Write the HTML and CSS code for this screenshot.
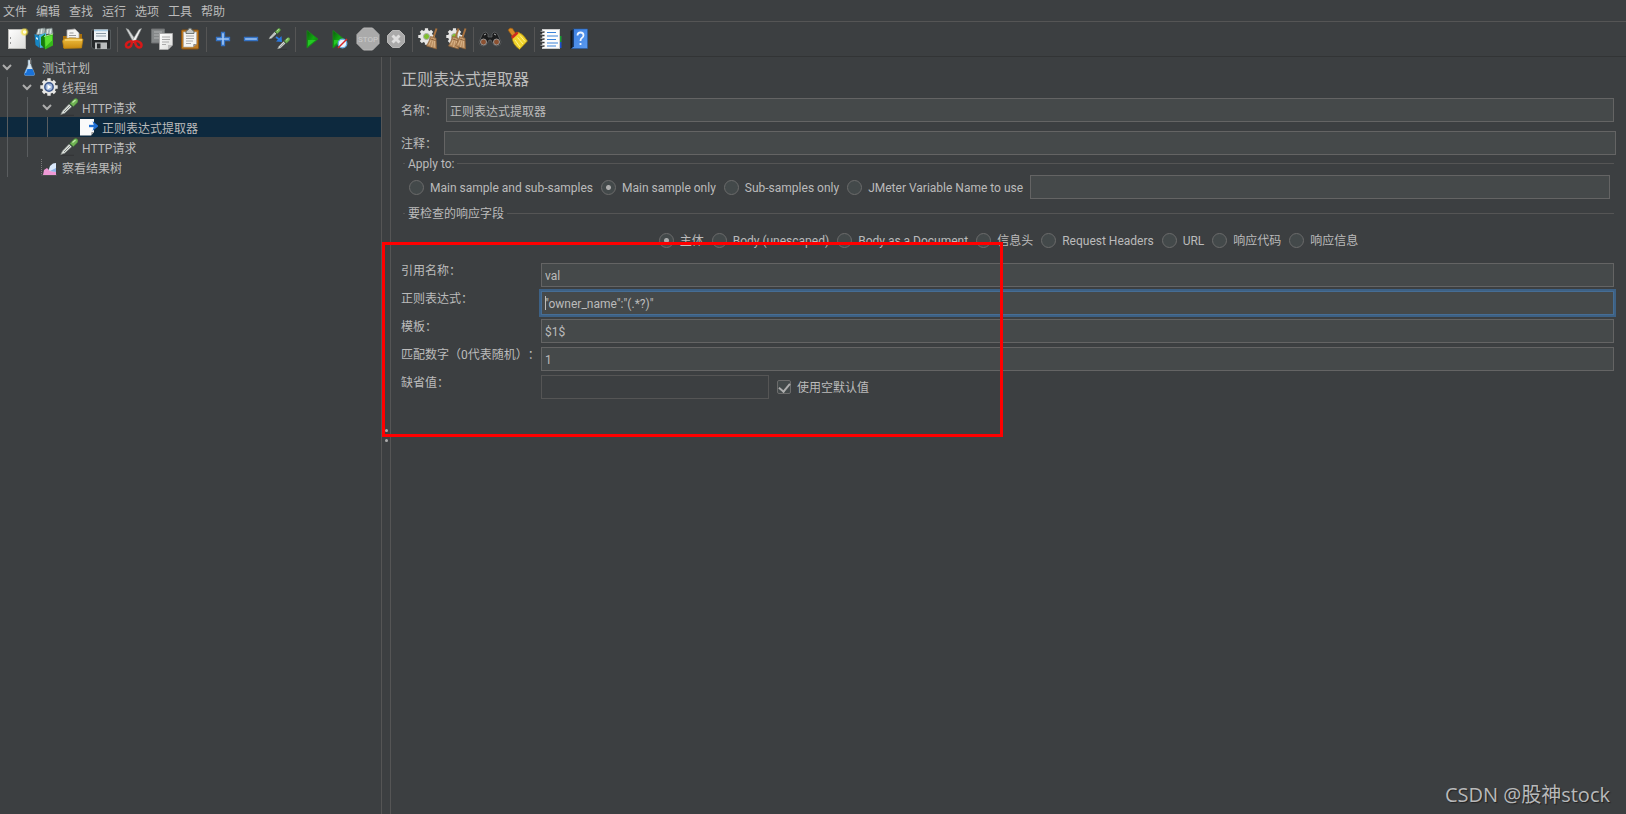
FILE: index.html
```html
<!DOCTYPE html>
<html lang="zh-CN">
<head>
<meta charset="utf-8">
<title>正则表达式提取器</title>
<link rel="stylesheet" href="styles.css">
</head>
<body>
<svg class="defs" aria-hidden="true">
  <defs>
    <linearGradient id="g-page" x1="0" y1="0" x2="1" y2="1"><stop offset="0" stop-color="#fff"/><stop offset="1" stop-color="#dcdcda"/></linearGradient>
    <linearGradient id="g-folder" x1="0" y1="0" x2="0" y2="1"><stop offset="0" stop-color="#f0c040"/><stop offset="1" stop-color="#c98a10"/></linearGradient>
    <linearGradient id="g-play" x1="0" y1="0" x2="1" y2="1"><stop offset="0" stop-color="#0a5c0a"/><stop offset=".5" stop-color="#12a812"/><stop offset="1" stop-color="#0a6a0a"/></linearGradient>
    <linearGradient id="g-book" x1="0" y1="0" x2="1" y2="1"><stop offset="0" stop-color="#3a7ee0"/><stop offset="1" stop-color="#5b9bf0"/></linearGradient>
    <radialGradient id="g-glow"><stop offset="0" stop-color="#fffbd0"/><stop offset=".45" stop-color="#f5e14a"/><stop offset="1" stop-color="#f5e14a" stop-opacity="0"/></radialGradient>
    <symbol id="dropper" viewBox="0 0 18 18">
      <path d="M1 17.300h13" stroke="#2c2e2f" stroke-width="1" opacity=".6"/>
      <path d="M.8 16.500 2.500 13 9.500 5.800l2.700 2.400-7.500 7z" fill="#dfe4df" stroke="#858a87" stroke-width=".7"/>
      <path d="M4 14 10.500 7.500" stroke="#6a706d" stroke-width=".8"/>
      <path d="m9 5 4 4" stroke="#35433a" stroke-width="1.500"/>
      <path d="m10 5.500 4-4.200q2-1.500 3.300 0t0 3.300l-4 3.900z" fill="#72b455" stroke="#468a36" stroke-width=".6"/>
      <path d="m12.500 4.500 3-2.500" stroke="#c5ebae" stroke-width="1.200"/>
    </symbol>
    <symbol id="gear" viewBox="0 0 18 18">
      <g fill="#e7e7e5"><circle cx="9" cy="9" r="6.800"/><g stroke="#e7e7e5" stroke-width="3.400"><path d="M9 .3v17.400M.3 9h17.400M3 3l12 12M15 3 3 15"/></g></g>
    </symbol>
    <symbol id="broom" viewBox="0 0 12 22">
      <path d="m10.500.5-3 9" stroke="#a8723f" stroke-width="2"/>
      <path d="M4.500 8.500 10 10l.5 11-10-3Q3.500 13 4.500 8.500z" fill="#b98d5f" stroke="#8a6038" stroke-width=".7"/>
      <path d="M6 10 3 17M7.500 10.500 5.500 19M8.700 11l-.5 8.500" stroke="#e0bd92" stroke-width=".8"/>
      <path d="m4.500 11 5 1.500" stroke="#7b4d27" stroke-width=".8"/>
    </symbol>
  </defs>
</svg>

<nav class="menubar" aria-label="主菜单">
  <button>文件</button><button>编辑</button><button>查找</button><button>运行</button><button>选项</button><button>工具</button><button>帮助</button>
</nav>

<div class="toolbar" role="toolbar" aria-label="工具栏">
  <button aria-label="新建"><svg viewBox="0 0 24 24"><rect x="3.500" y="2.500" width="17" height="19" fill="url(#g-page)" stroke="#b9b9b6"/><path d="M5.500 10v2M5.500 15v2" stroke="#999"/><circle cx="19.500" cy="5" r="4.500" fill="url(#g-glow)"/><circle cx="19.500" cy="5" r="1.800" fill="#fffde0"/></svg></button>
  <button aria-label="模板"><svg viewBox="0 0 24 24"><path d="m3 8 2-6 7-1 1 6zM11 7l2-5 6-1 1 6z" fill="#aab6b5" stroke="#707d7c" stroke-width=".7"/><path d="m6 2-1 5m4-5.500L8 7m7-5-1 5m4-5-1 5" stroke="#e4eaea"/><path d="m1.500 7 5 2v12l-4-3z" fill="#1686c4"/><path d="m6 8 7-2v14l-6 1z" fill="#45b4e6"/><path d="m3 10 2 1v2l-2-1z" fill="#c8ecff"/><path d="m8 10 4-3v15l-4-4z" fill="#167c0c"/><path d="m11.500 9.500 8.500-2v11l-8 4z" fill="#35b81a"/><path d="m12 10 7-1.500v5L12.500 20z" fill="#5ee032"/><path d="m11 9.500 9-2.500" stroke="#a8f088"/></svg></button>
  <button aria-label="打开"><svg viewBox="0 0 24 24"><path d="M2 9h4l1-2h14v14H2z" fill="#a96f0a"/><path d="M6 13V3l8-1 4 4v8z" fill="#f4f4f2" stroke="#aaa" stroke-width=".8"/><path d="M8.500 6h4M8 8.500h7M8 11h7" stroke="#999"/><path d="m3 12 6-1 12 .500 1 1-1.500 8.500L3 21.500 1.500 14z" fill="url(#g-folder)" stroke="#b57d10" stroke-width=".7"/><path d="M4 13h17" stroke="#ffe28c"/></svg></button>
  <button aria-label="保存"><svg viewBox="0 0 24 24"><path d="M2.500 3h19v19H4.500l-2-2z" fill="#25282a" stroke="#555a5c"/><rect x="5" y="2.500" width="14" height="10.500" fill="#eef3f6"/><path d="M5 3.500h14" stroke="#a8cce4" stroke-width="1.500"/><path d="M7 6.500h10M7 9h10" stroke="#8a9aa5"/><rect x="6" y="15.500" width="12" height="6.500" fill="#babdbe"/><rect x="8" y="16.500" width="3.500" height="5" fill="#25282a"/></svg></button>
  <span class="sep"></span>
  <button aria-label="剪切"><svg viewBox="0 0 24 24"><path d="M4 1.500 6.500 2.500l7.500 11-2.500 2z" fill="#d6d8d8" stroke="#8e9494" stroke-width=".6"/><path d="M19.500 1.500 17 2.500l-7 11.500 2.500 2z" fill="#f1f1f1" stroke="#8e9494" stroke-width=".6"/><path d="M10.500 14.500Q8 13.500 5.500 15.500t-1 4.500q2.500 1.500 4.500-1l1.500-4.500zM12.500 14.500q3-1 5.500 1t1 4.500q-2.500 1.500-4.500-1l-2-4.500z" fill="none" stroke="#d81818" stroke-width="2.400"/></svg></button>
  <button aria-label="复制"><svg viewBox="0 0 24 24"><path d="M1.500 2h13v14h-13z" fill="#858889" stroke="#6c6f70"/><path d="M4 5h8M4 8h8M4 11h8" stroke="#b0b2b3"/><path d="M9.500 6.500h13V18L18 22.500H9.500z" fill="url(#g-page)" stroke="#aaa"/><path d="M12 10h8M12 12.500h8M12 15h7M12 17.500h4" stroke="#aaa"/><path d="M18 22.500V18h4.500z" fill="#bbb"/></svg></button>
  <button aria-label="粘贴"><svg viewBox="0 0 24 24"><rect x="3.500" y="3" width="17" height="19" rx="1" fill="#bd7a23" stroke="#875111"/><path d="M5.500 5h13v12L15 20H5.500z" fill="#f5f5f3" stroke="#aaa" stroke-width=".6"/><path d="M8 5q0-2 2-2 .5-2 2-2t2 2q2 0 2 2v1.500H8z" fill="#c5c9c7" stroke="#59605d" stroke-width=".8"/><path d="M8 9h8M8 11.500h8M8 14h7M8 16.500h5" stroke="#aaa"/><path d="m15 20 .5-3h3z" fill="#888"/></svg></button>
  <span class="sep"></span>
  <button aria-label="展开"><svg viewBox="0 0 24 24"><path d="M10.500 5.500h3v5h5v3h-5v5h-3v-5h-5v-3h5z" fill="#9ec6f6" stroke="#3472c4" stroke-width="1.300"/></svg></button>
  <button aria-label="折叠"><svg viewBox="0 0 24 24"><path d="M5.500 10.500h13v3h-13z" fill="#9ec6f6" stroke="#3472c4" stroke-width="1.300"/></svg></button>
  <button aria-label="切换"><svg viewBox="0 0 24 24"><use href="#dropper" x="1" y="1" width="13" height="12"/><use href="#dropper" x="10" y="10" width="13" height="13"/><path d="m9 10 4 3" stroke="#2a78e0" stroke-width="1.800"/><path d="m14.500 9 .5 6-6-.5z" fill="#2a78e0"/></svg></button>
  <span class="sep"></span>
  <button aria-label="启动"><svg viewBox="0 0 24 24"><path d="M7 3.500 18 12 7 21z" fill="url(#g-play)" stroke="#198c19" stroke-width=".8"/><path d="M8 13h8l-8 6z" fill="#2bd62b" opacity=".75"/></svg></button>
  <button aria-label="不停顿开始"><svg viewBox="0 0 24 24"><path d="M5 3.500 16 12 5 21z" fill="url(#g-play)" stroke="#198c19" stroke-width=".8"/><path d="M6 13h7l-7 5z" fill="#2bd62b" opacity=".75"/><circle cx="14.500" cy="16.500" r="4.300" fill="#e7f4ff" stroke="#69aee4" stroke-width="1.300"/><path d="m10 21 9-9" stroke="#d82424" stroke-width="1.400"/></svg></button>
  <button aria-label="停止" disabled><svg viewBox="0 0 24 24"><path d="M7.500 1h9L23 7.500v9L16.500 23h-9L1 16.500v-9z" fill="#aaa" stroke="#b8b8b8"/><text x="12" y="15" class="stop">STOP</text></svg></button>
  <button aria-label="关闭" disabled><svg viewBox="0 0 24 24"><path d="M8.500 3.500h7l5 5v7l-5 5h-7l-5-5v-7z" fill="#aaa" stroke="#b8b8b8"/><path d="m8.500 8.500 7 7m0-7-7 7" stroke="#dedede" stroke-width="3"/></svg></button>
  <span class="sep"></span>
  <button aria-label="清除"><svg viewBox="0 0 24 24"><use href="#gear" x="1" y="1" width="17" height="17"/><circle cx="9.500" cy="9.500" r="3" fill="#7fc02e" stroke="#aaa"/><use href="#broom" x="9" y="1" width="12" height="22"/></svg></button>
  <button aria-label="清除全部"><svg viewBox="0 0 24 24"><use href="#gear" x="1" y="1" width="17" height="17"/><circle cx="9.500" cy="9.500" r="3" fill="#7fc02e" stroke="#aaa"/><use href="#broom" x="3" y="1" width="12" height="22"/><use href="#broom" x="10" y="1" width="12" height="22"/></svg></button>
  <span class="sep"></span>
  <button aria-label="查找"><svg viewBox="0 0 24 24"><path d="M4 8q1-3 4-3l2 2v3h4V7l2-2q3 0 4 3l3 7q0 4-4 4t-5-4l-1-2h-2l-1 2q-1 4-5 4t-4-4z" fill="#1b1c1d" stroke="#66696a" stroke-width=".7"/><circle cx="5.500" cy="15" r="3" fill="#8c5131" stroke="#999"/><circle cx="18.500" cy="15" r="3" fill="#8c5131" stroke="#999"/><path d="m6 8 2-1m8 0 2 1" stroke="#aaa"/></svg></button>
  <button aria-label="重置查找"><svg viewBox="0 0 24 24"><path d="M2 3q2-3 4.500-1.500L10 7 6.500 9.500z" fill="#d88a27" stroke="#8d5614" stroke-width=".7"/><path d="m6 10 6-5q5 1.500 9.500 9l-8 8.500Q6 17 6 10z" fill="#f0d32b" stroke="#9e7d10" stroke-width=".7"/><path d="m5 9.500 6-5 1.500 2-6 5.500z" fill="#cd2d1e"/><path d="m9 13 5 7m-2.500-9.500L17 17m-3-8.500 5 6" stroke="#fff28a"/></svg></button>
  <span class="sep"></span>
  <button aria-label="函数助手"><svg viewBox="0 0 24 24"><path d="M20 9h2.500v6H20z" fill="#169c32"/><path d="M20 15h2.500v6H20z" fill="#1b50cf"/><rect x="3.500" y="2.500" width="17" height="19" fill="#fcfcfc" stroke="#ccc"/><path d="M8 5.500h9M8 9h11M8 12.500h9M8 16h11M8 19h9" stroke="#3a82d8" stroke-width="1.100"/><path d="M1.500 5h4M1.500 8.500h4M1.500 12h4M1.500 15.500h4M1.500 19h4" stroke="#222" stroke-width="1.500"/><path d="M1.500 4.300h3M1.500 7.800h3M1.500 11.300h3M1.500 14.800h3M1.500 18.300h3" stroke="#ddd" stroke-width=".7"/></svg></button>
  <button aria-label="帮助"><svg viewBox="0 0 24 24"><path d="m3.500 4 3-2v18l-3 2z" fill="#151718"/><path d="M6 2h14.500v19.500H4.500L6 20z" fill="url(#g-book)" stroke="#235ba8" stroke-width=".6"/><path d="M6.500 2v18" stroke="#1c3d70"/><path d="M10.500 8.500q0-3 3-3t3 2.700q0 1.800-1.700 2.800-1.300.8-1.300 3M13.500 16v2" fill="none" stroke="#eef5ff" stroke-width="1.800"/></svg></button>
</div>

<div class="workspace">
  <ul class="tree" role="tree">
    <li role="treeitem"><svg class="chev" viewBox="0 0 20 20"><path d="m3 8 4 4 4-4"/></svg>
      <svg class="ico" viewBox="0 0 18 18"><path d="M8 2h3v5l3.500 8.500q.5 2-1 2h-8q-1.500 0-1-2L8 7z" fill="#d5e4ee" stroke="#8195a2" stroke-width=".6"/><path d="M6.500 11h6l2 4.500q.3 2-1 2h-8q-1.300 0-1-2z" fill="#1a72d8"/><path d="m7 11-1.500 4" stroke="#8cc4ff"/><path d="M10.500 0v6" stroke="#777"/></svg><span>测试计划</span></li>
    <li role="treeitem"><i class="guide"></i><svg class="chev" viewBox="0 0 20 20"><path d="m3 8 4 4 4-4"/></svg>
      <svg class="ico" viewBox="0 0 18 18"><use href="#gear" width="18" height="18"/><circle cx="9" cy="9" r="4.200" fill="#9eb6dc" stroke="#3d588c" stroke-width="1.500"/><path d="m7.500 6.500 4 2.500-4 2.500z" fill="#fff"/></svg><span>线程组</span></li>
    <li role="treeitem"><i class="guide"></i><i class="guide"></i><svg class="chev" viewBox="0 0 20 20"><path d="m3 8 4 4 4-4"/></svg>
      <svg class="ico"><use href="#dropper"/></svg><span>HTTP请求</span></li>
    <li role="treeitem" class="selected" aria-selected="true"><i class="guide"></i><i class="guide"></i><i class="guide"></i><i class="blank"></i>
      <svg class="ico" viewBox="0 0 18 18"><path d="M0 1h14v13l-3 3.500H0z" fill="#fafafa"/><path d="m11 17.500.5-3.500H14z" fill="#999"/><path d="M9 8h6" stroke="#1e6fd4" stroke-width="2.400"/><path d="M12.500 3 18.500 8l-6 5 1.500-5z" fill="#1e6fd4"/></svg><span>正则表达式提取器</span></li>
    <li role="treeitem"><i class="guide"></i><i class="guide"></i><i class="blank"></i>
      <svg class="ico"><use href="#dropper"/></svg><span>HTTP请求</span></li>
    <li role="treeitem"><i class="guide"></i><i class="blank"></i>
      <svg class="ico" viewBox="0 0 18 18"><path d="M1.500 1v16H17" fill="none" stroke="#777" stroke-dasharray="1 1"/><path d="m8 14 2-6 3-2.500 3-.5v10z" fill="#d9e8fb"/><path d="m3 17 1-5 3-2 3 3 6 1v3z" fill="#ef9ad6"/><path d="m10 13 6-3v4z" fill="#8fb2e6"/></svg><span>察看结果树</span></li>
  </ul>

  <div class="splitter" role="separator"><i></i><i></i><i></i></div>

  <main class="editor">
    <h1>正则表达式提取器</h1>
    <div class="row name"><label for="name">名称：</label><input id="name" type="text" value="正则表达式提取器"></div>
    <div class="row comment"><label for="comment">注释：</label><input id="comment" type="text"></div>

    <fieldset>
      <legend>Apply to:</legend>
      <div class="scope">
        <label><input type="radio" name="scope"><span>Main sample and sub-samples</span></label>
        <label><input type="radio" name="scope" checked><span>Main sample only</span></label>
        <label><input type="radio" name="scope"><span>Sub-samples only</span></label>
        <label><input type="radio" name="scope"><span>JMeter Variable Name to use</span></label>
        <input type="text" aria-label="JMeter Variable Name">
      </div>
    </fieldset>

    <fieldset>
      <legend>要检查的响应字段</legend>
      <div class="targets">
        <label><input type="radio" name="field" checked><span>主体</span></label>
        <label><input type="radio" name="field"><span>Body (unescaped)</span></label>
        <label><input type="radio" name="field"><span>Body as a Document</span></label>
        <label><input type="radio" name="field"><span>信息头</span></label>
        <label><input type="radio" name="field"><span>Request Headers</span></label>
        <label><input type="radio" name="field"><span>URL</span></label>
        <label><input type="radio" name="field"><span>响应代码</span></label>
        <label><input type="radio" name="field"><span>响应信息</span></label>
      </div>
    </fieldset>

    <div class="params">
      <label for="ref">引用名称：</label><input id="ref" type="text" value="val">
      <label for="regex">正则表达式：</label><input id="regex" class="focused" type="text" value='"owner_name":"(.*?)"'>
      <label for="template">模板：</label><input id="template" type="text" value="$1$">
      <label for="match">匹配数字（0代表随机）：</label><input id="match" type="text" value="1">
      <label for="default">缺省值：</label>
      <div class="default"><input id="default" type="text" disabled><label><input type="checkbox" checked><span>使用空默认值</span></label></div>
    </div>
  </main>
</div>
<div class="highlight"></div>
<div class="watermark">CSDN @股神stock</div>
</body>
</html>
```
FILE: styles.css
```css
* { box-sizing: border-box; }

body {
  margin: 0;
  min-height: 100vh;
  display: flex;
  flex-direction: column;
  position: relative;
  background: #3c3f41;
  color: #bbb;
  font: 12px/16px Roboto, "Noto Sans CJK SC", sans-serif;
  text-spacing-trim: space-all;
}

button, input { font: inherit; color: inherit; }
button { background: none; border: 0; padding: 0; }
.defs { position: absolute; width: 0; height: 0; }

.menubar {
  display: flex;
  gap: 9px;
  height: 22px;
  padding: 2px 3px 0;
  border-bottom: 1px solid #555;
}

.toolbar {
  display: flex;
  align-items: center;
  height: 35px;
  padding: 0 3px;
  border-bottom: 1px solid #323435;
}
.toolbar button { width: 28px; height: 28px; display: grid; place-items: center; }
.toolbar svg { width: 24px; height: 24px; fill: none; }
.sep { width: 5px; height: 25px; background: linear-gradient(#555, #555) 2px 0 / 1px 100% no-repeat; }
.stop { font: 8px Roboto, sans-serif; fill: #ccc; text-anchor: middle; }

.workspace { flex: 1; display: flex; }

.tree { flex: 0 0 381px; margin: 0; padding: 0; list-style: none; }
.tree li { display: flex; align-items: center; height: 20px; white-space: nowrap; }
.tree span { padding-top: 3px; }
.tree .selected { background: #0d293e; }
.guide { width: 20px; height: 20px; background: linear-gradient(#5a5d5f, #5a5d5f) 7px 0 / 1px 100% no-repeat; }
.blank { width: 20px; }
.chev { width: 20px; height: 20px; fill: none; stroke: #adadad; stroke-width: 2; }
.ico { width: 18px; height: 18px; margin-right: 4px; }

.splitter {
  flex: 0 0 10px;
  display: flex;
  flex-direction: column;
  justify-content: center;
  align-items: center;
  gap: 2px;
  border: solid #555;
  border-width: 0 1px;
}
.splitter i { width: 3px; height: 3px; border-radius: 50%; background: #adadad; }

.editor { flex: 1; min-width: 0; padding: 11px 10px 0; }
h1 { margin: 0 0 6px; font-size: 16px; line-height: 24px; font-weight: 400; }

input[type="text"] {
  flex: 1;
  min-width: 0;
  height: 24px;
  padding: 1px 3px 0;
  border: 1px solid #646464;
  background: #45494a;
  outline: 0;
}
input[type="text"]:disabled { background: none; border-color: #555; }
input.focused {
  border-color: #466d94;
  box-shadow: 0 0 0 2px #3d6185;
  background: linear-gradient(#bbb, #bbb) 3px 4px / 1px 14px no-repeat #45494a;
}

input[type="radio"], input[type="checkbox"] {
  appearance: none;
  width: 15px;
  height: 15px;
  margin: 0;
  border: 1px solid #6b6b6b;
  border-radius: 50%;
  background: #43494a;
}
input[type="radio"]:checked { background: radial-gradient(circle, #adadad 2px, #43494a 3px); }
input[type="checkbox"] { width: 14px; height: 14px; border-radius: 2px; display: grid; place-items: center; }
input[type="checkbox"]::before {
  content: "";
  width: 5px;
  height: 9px;
  margin-bottom: 2px;
  border: solid #adadad;
  border-width: 0 2px 2px 0;
  transform: rotate(40deg);
}

.row { display: flex; align-items: center; }
.row label { padding-top: 2px; }
.name { margin: 0 2px 9px 0; }
.name label { width: 45px; }
.comment label { width: 43px; }

fieldset { margin: -1px 2px 0; padding: 0; border: 0 solid #555; border-top-width: 1px; min-width: 0; }
legend { margin-left: 2px; padding: 2px 3px 0; }
.scope, .targets { display: flex; align-items: center; gap: 8px; }
.scope { padding: 3px 4px 6px 6px; }
.scope > input { margin-left: -1px; }
.targets { justify-content: center; padding: 9px 0 14px; }
.scope label, .targets label, .default label { display: flex; align-items: center; gap: 6px; white-space: nowrap; }
label span { padding-top: 2px; }

.params { display: grid; grid-template-columns: 140px 1fr; gap: 4px 0; margin-right: 2px; }
.default { display: flex; align-items: center; gap: 8px; }
.default input[type="text"] { flex: 0 0 228px; }

.highlight { position: absolute; left: 382px; top: 242px; width: 621px; height: 195px; border: 3px solid #f00; }
.watermark {
  position: absolute;
  right: 16px;
  bottom: 5px;
  font: 20px/28px "Open Sans", "Noto Sans CJK SC", sans-serif;
  color: #b8b9ba;
  text-shadow: 1px 1px 1px #222;
}
```
